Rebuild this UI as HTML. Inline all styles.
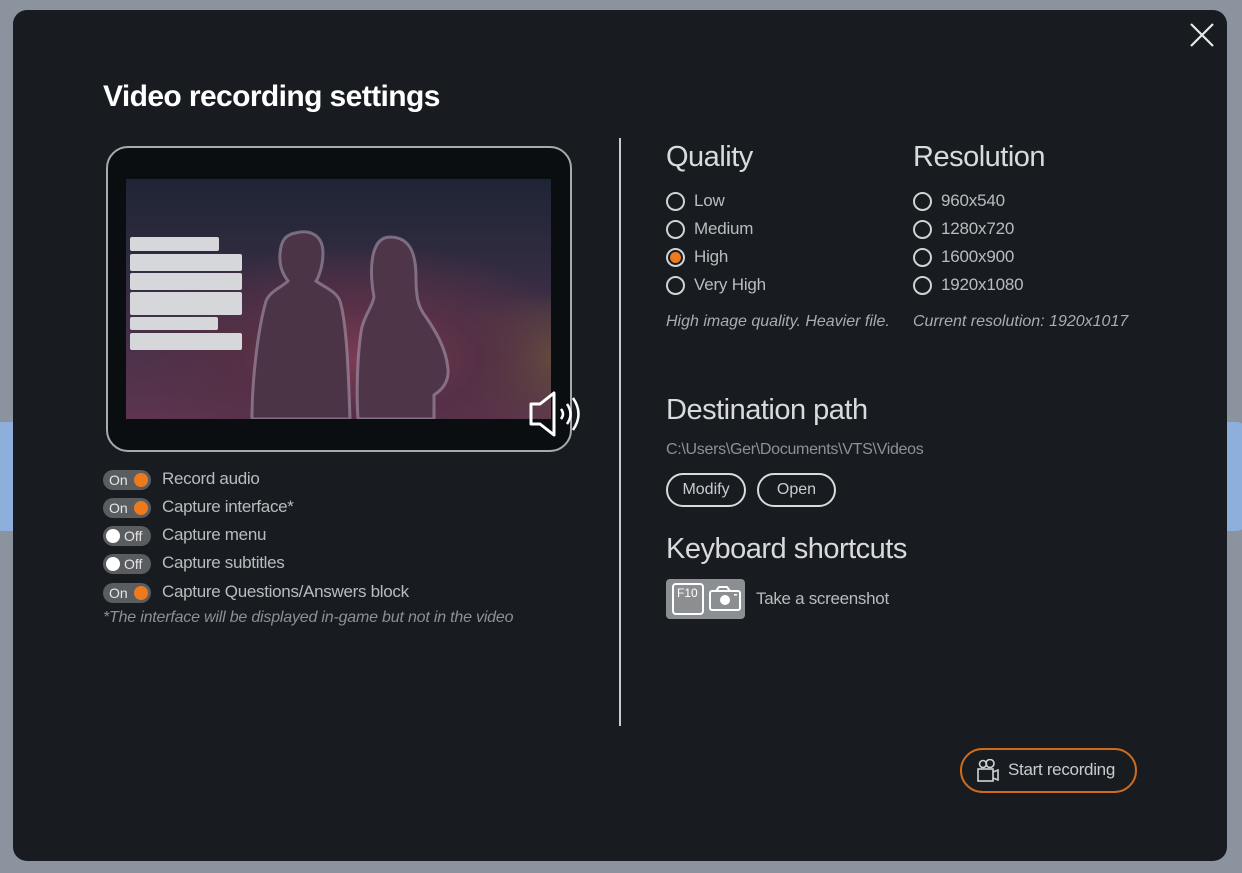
<!DOCTYPE html>
<html><head><meta charset="utf-8">
<style>
*{margin:0;padding:0;box-sizing:border-box}
body{width:1242px;height:873px;background:#8a939e;position:relative;overflow:hidden;font-family:"Liberation Sans",sans-serif;color:#c9cccf}
.blue{position:absolute;background:#8eaedb;top:422px;height:109px}
.modal{position:absolute;left:13px;top:10px;width:1214px;height:851px;background:#181c20;border-radius:14px}
.a{position:absolute;white-space:nowrap}
h1{position:absolute;left:103px;top:80px;font-size:30px;font-weight:bold;color:#fff;letter-spacing:-0.6px}
.h2{position:absolute;font-size:29px;color:#d8dadc;font-weight:normal;letter-spacing:-0.5px}
.radio{position:absolute;width:19px;height:19px;border:2px solid #d0d2d4;border-radius:50%}
.radio.on::after{content:"";position:absolute;left:2px;top:2px;width:11px;height:11px;border-radius:50%;background:#ee7a1e}
.rl{position:absolute;font-size:17px;color:#b9bcbf;letter-spacing:-0.2px}
.it{position:absolute;font-size:16px;font-style:italic;color:#a9adb1}
.tog{position:absolute;left:103px;width:48px;height:20px;border-radius:10px;background:#5a5d60;font-size:14px;color:#e6e6e6}
.tog .k{position:absolute;top:3px;width:14px;height:14px;border-radius:50%}
.tl{position:absolute;left:162px;font-size:17px;color:#b9bcbf;letter-spacing:-0.3px}
.btn{position:absolute;height:34px;border:2px solid #d8dadc;border-radius:17px;font-size:16px;color:#c9cccf;text-align:center;line-height:30px}
</style></head><body>
<div class="blue" style="left:0;width:20px"></div>
<div class="blue" style="left:1210px;width:40px;border-radius:14px"></div>
<div class="modal"></div>
<svg class="a" style="left:1189px;top:22px" width="26" height="26"><path d="M2 2L24 24M24 2L2 24" stroke="#e8e8e8" stroke-width="2.2"/></svg>
<h1>Video recording settings</h1>

<div class="a" style="left:106px;top:146px;width:466px;height:306px;border:2px solid #a8abae;border-radius:22px;background:#0b0e11"></div>
<div class="a" style="left:126px;top:179px;width:425px;height:240px;background:radial-gradient(ellipse 70% 60% at 55% 75%,#7a3c54 0%,#553045 40%,transparent 80%),radial-gradient(ellipse 40% 40% at 100% 75%,#6a5a3a 0%,transparent 70%),linear-gradient(180deg,#1e2535 0%,#3a2e45 50%,#5e3550 100%)"></div>
<svg class="a" style="left:240px;top:225px" width="230" height="194">
<path d="M55 8c15-4 28 2 28 20 0 12-4 24-7 28 8 6 20 10 24 20 6 20 8 60 10 118H12c0-40 6-90 14-118 4-10 16-14 22-20-6-8-9-16-8-28 1-12 5-18 15-20z" fill="#4a3445" stroke="#c8b8d0" stroke-opacity=".45" stroke-width="3"/>
<path d="M150 12c22 0 26 20 26 40 0 20 2 30 10 40 8 12 20 30 22 52 1 15-8 22-14 26v24h-76c-2-30 0-72 4-92 4-14 10-20 12-30-4-20-6-60 16-60z" fill="#4e3548" stroke="#c8b8d0" stroke-opacity=".45" stroke-width="3"/>
</svg>
<div class="a" style="left:130px;top:237px;width:89px;height:14px;background:#d5d7da;border-radius:2px"></div>
<div class="a" style="left:130px;top:254px;width:112px;height:17px;background:#d5d7da;border-radius:2px"></div>
<div class="a" style="left:130px;top:273px;width:112px;height:17px;background:#d5d7da;border-radius:2px"></div>
<div class="a" style="left:130px;top:292px;width:112px;height:23px;background:#d5d7da;border-radius:2px"></div>
<div class="a" style="left:130px;top:317px;width:88px;height:13px;background:#d5d7da;border-radius:2px"></div>
<div class="a" style="left:130px;top:333px;width:112px;height:17px;background:#d5d7da;border-radius:2px"></div>
<svg class="a" style="left:528px;top:390px" width="56" height="50"><path d="M3 14h9l14-11v42l-14-11H3z" fill="none" stroke="#fff" stroke-width="3" stroke-linejoin="round"/><path d="M33 19q4 5 0 10M39 14q7 10 0 20M45 8q11 16 0 32" fill="none" stroke="#fff" stroke-width="2.5"/></svg>

<div class="tog" style="top:470px"><span class="a" style="left:6px;top:2px">On</span><span class="k" style="left:31px;background:#ee7a1e"></span></div>
<div class="tl" style="top:469px">Record audio</div>
<div class="tog" style="top:498px"><span class="a" style="left:6px;top:2px">On</span><span class="k" style="left:31px;background:#ee7a1e"></span></div>
<div class="tl" style="top:497px">Capture interface*</div>
<div class="tog" style="top:526px"><span class="k" style="left:3px;background:#fff"></span><span class="a" style="left:21px;top:2px">Off</span></div>
<div class="tl" style="top:525px">Capture menu</div>
<div class="tog" style="top:554px"><span class="k" style="left:3px;background:#fff"></span><span class="a" style="left:21px;top:2px">Off</span></div>
<div class="tl" style="top:553px">Capture subtitles</div>
<div class="tog" style="top:583px"><span class="a" style="left:6px;top:2px">On</span><span class="k" style="left:31px;background:#ee7a1e"></span></div>
<div class="tl" style="top:582px">Capture Questions/Answers block</div>
<div class="it" style="left:103px;top:609px;color:#8d9195;letter-spacing:-0.2px">*The interface will be displayed in-game but not in the video</div>

<div class="a" style="left:619px;top:138px;width:2px;height:588px;background:#c9cccf"></div>

<div class="h2" style="left:666px;top:141px">Quality</div>
<div class="h2" style="left:913px;top:141px">Resolution</div>
<div class="radio" style="left:666px;top:192px"></div><div class="rl" style="left:694px;top:191px">Low</div>
<div class="radio" style="left:666px;top:220px"></div><div class="rl" style="left:694px;top:219px">Medium</div>
<div class="radio on" style="left:666px;top:248px"></div><div class="rl" style="left:694px;top:247px">High</div>
<div class="radio" style="left:666px;top:276px"></div><div class="rl" style="left:694px;top:275px">Very High</div>
<div class="radio" style="left:913px;top:192px"></div><div class="rl" style="left:941px;top:191px">960x540</div>
<div class="radio" style="left:913px;top:220px"></div><div class="rl" style="left:941px;top:219px">1280x720</div>
<div class="radio" style="left:913px;top:248px"></div><div class="rl" style="left:941px;top:247px">1600x900</div>
<div class="radio" style="left:913px;top:276px"></div><div class="rl" style="left:941px;top:275px">1920x1080</div>
<div class="it" style="left:666px;top:313px">High image quality. Heavier file.</div>
<div class="it" style="left:913px;top:313px">Current resolution: 1920x1017</div>

<div class="h2" style="left:666px;top:394px">Destination path</div>
<div class="a" style="left:666px;top:441px;font-size:16px;color:#8d9195;letter-spacing:-0.3px">C:\Users\Ger\Documents\VTS\Videos</div>
<div class="btn" style="left:666px;top:473px;width:80px">Modify</div>
<div class="btn" style="left:757px;top:473px;width:79px">Open</div>

<div class="h2" style="left:666px;top:533px">Keyboard shortcuts</div>
<div class="a" style="left:666px;top:579px;width:79px;height:40px;background:#8c8f92;border-radius:4px"></div>
<div class="a" style="left:672px;top:583px;width:32px;height:32px;border:2px solid #fff;border-radius:4px;font-size:12px;color:#fff;padding:1px 0 0 3px">F10</div>
<svg class="a" style="left:708px;top:585px" width="34" height="28"><rect x="2" y="6" width="30" height="19" rx="2" fill="none" stroke="#fff" stroke-width="2"/><path d="M8 6l3-4h8l3 4" fill="none" stroke="#fff" stroke-width="2"/><circle cx="17" cy="15" r="5" fill="#fff"/><rect x="26" y="9" width="3" height="1.5" fill="#fff"/></svg>
<div class="a" style="left:756px;top:589px;font-size:17px;color:#b9bcbf;letter-spacing:-0.3px">Take a screenshot</div>

<div class="a" style="left:960px;top:748px;width:177px;height:45px;border:2px solid #d06a1c;border-radius:23px"></div>
<svg class="a" style="left:976px;top:759px" width="24" height="24"><circle cx="7" cy="5" r="3.5" fill="none" stroke="#d0d2d4" stroke-width="1.6"/><circle cx="14" cy="4.5" r="4" fill="none" stroke="#d0d2d4" stroke-width="1.6"/><rect x="2" y="10" width="15" height="12" fill="none" stroke="#d0d2d4" stroke-width="1.6"/><path d="M17 13l5-2v10l-5-2" fill="none" stroke="#d0d2d4" stroke-width="1.6"/></svg>
<div class="a" style="left:1008px;top:760px;font-size:17px;color:#c9cccf;letter-spacing:-0.3px">Start recording</div>
</body></html>
